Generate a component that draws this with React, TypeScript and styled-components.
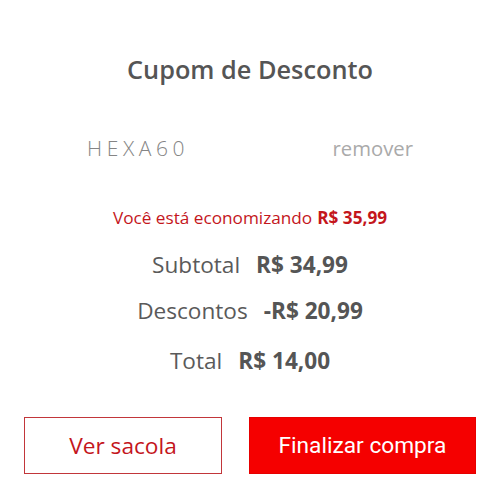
import styled, { createGlobalStyle } from 'styled-components';

const GlobalStyle = createGlobalStyle`
  html, body {
    margin: 0;
    padding: 0;
    background: #fff;
  }
  body {
    font-family: 'Open Sans', 'Liberation Sans', sans-serif;
  }
`;

const Panel = styled.div`
  width: 500px;
  height: 481px;
  box-sizing: border-box;
  padding: 52px 24px 0;
  display: flex;
  flex-direction: column;
  align-items: center;
`;

const Title = styled.h2`
  margin: 0;
  font-size: 25.3px;
  line-height: 34px;
  font-weight: 600;
  color: #555;
`;

const CouponRow = styled.div`
  margin-top: 47px;
  width: 326px;
  height: 30px;
  display: flex;
  justify-content: space-between;
  align-items: center;
`;

const CouponCode = styled.span`
  font-size: 21px;
  font-weight: 300;
  letter-spacing: 4.6px;
  color: #858585;
`;

const RemoveLink = styled.a`
  font-size: 20.3px;
  color: #aaa;
  cursor: pointer;
`;

const Savings = styled.p`
  margin: 44px 0 0;
  font-size: 17.2px;
  line-height: 22px;
  color: #c4161c;

  strong {
    font-weight: 700;
    margin-left: 5px;
  }
`;

const SummaryRow = styled.div<{ $gap: number }>`
  margin-top: ${p => p.$gap}px;
  display: flex;
  align-items: baseline;
  gap: 16px;
  font-size: 22.6px;
  line-height: 32px;
`;

const Label = styled.span`
  color: #5a5a5a;
`;

const Value = styled.span`
  color: #555;
  font-weight: 700;
`;

const Actions = styled.div`
  margin-top: 40px;
  width: 100%;
  display: flex;
  justify-content: space-between;
`;

const Button = styled.button<{ $primary?: boolean }>`
  height: 57px;
  box-sizing: border-box;
  font-size: 22.7px;
  cursor: pointer;
  ${p =>
    p.$primary
      ? `
    width: 227px;
    background: #f50000;
    color: #fff;
    border: 1px solid #e60000;
    font-family: Roboto, 'Open Sans', sans-serif;
  `
      : `
    width: 198px;
    background: #fff;
    color: #c4161c;
    border: 1px solid #c2363a;
    font-family: 'Open Sans', sans-serif;
  `}
`;

export default function App() {
  return (
    <>
      <GlobalStyle />
      <Panel>
        <Title>Cupom de Desconto</Title>
        <CouponRow>
          <CouponCode>HEXA60</CouponCode>
          <RemoveLink>remover</RemoveLink>
        </CouponRow>
        <Savings>
          Você está economizando<strong>R$ 35,99</strong>
        </Savings>
        <SummaryRow $gap={20}>
          <Label>Subtotal</Label>
          <Value>R$ 34,99</Value>
        </SummaryRow>
        <SummaryRow $gap={14}>
          <Label>Descontos</Label>
          <Value>-R$ 20,99</Value>
        </SummaryRow>
        <SummaryRow $gap={18}>
          <Label>Total</Label>
          <Value>R$ 14,00</Value>
        </SummaryRow>
        <Actions>
          <Button>Ver sacola</Button>
          <Button $primary>Finalizar compra</Button>
        </Actions>
      </Panel>
    </>
  );
}
